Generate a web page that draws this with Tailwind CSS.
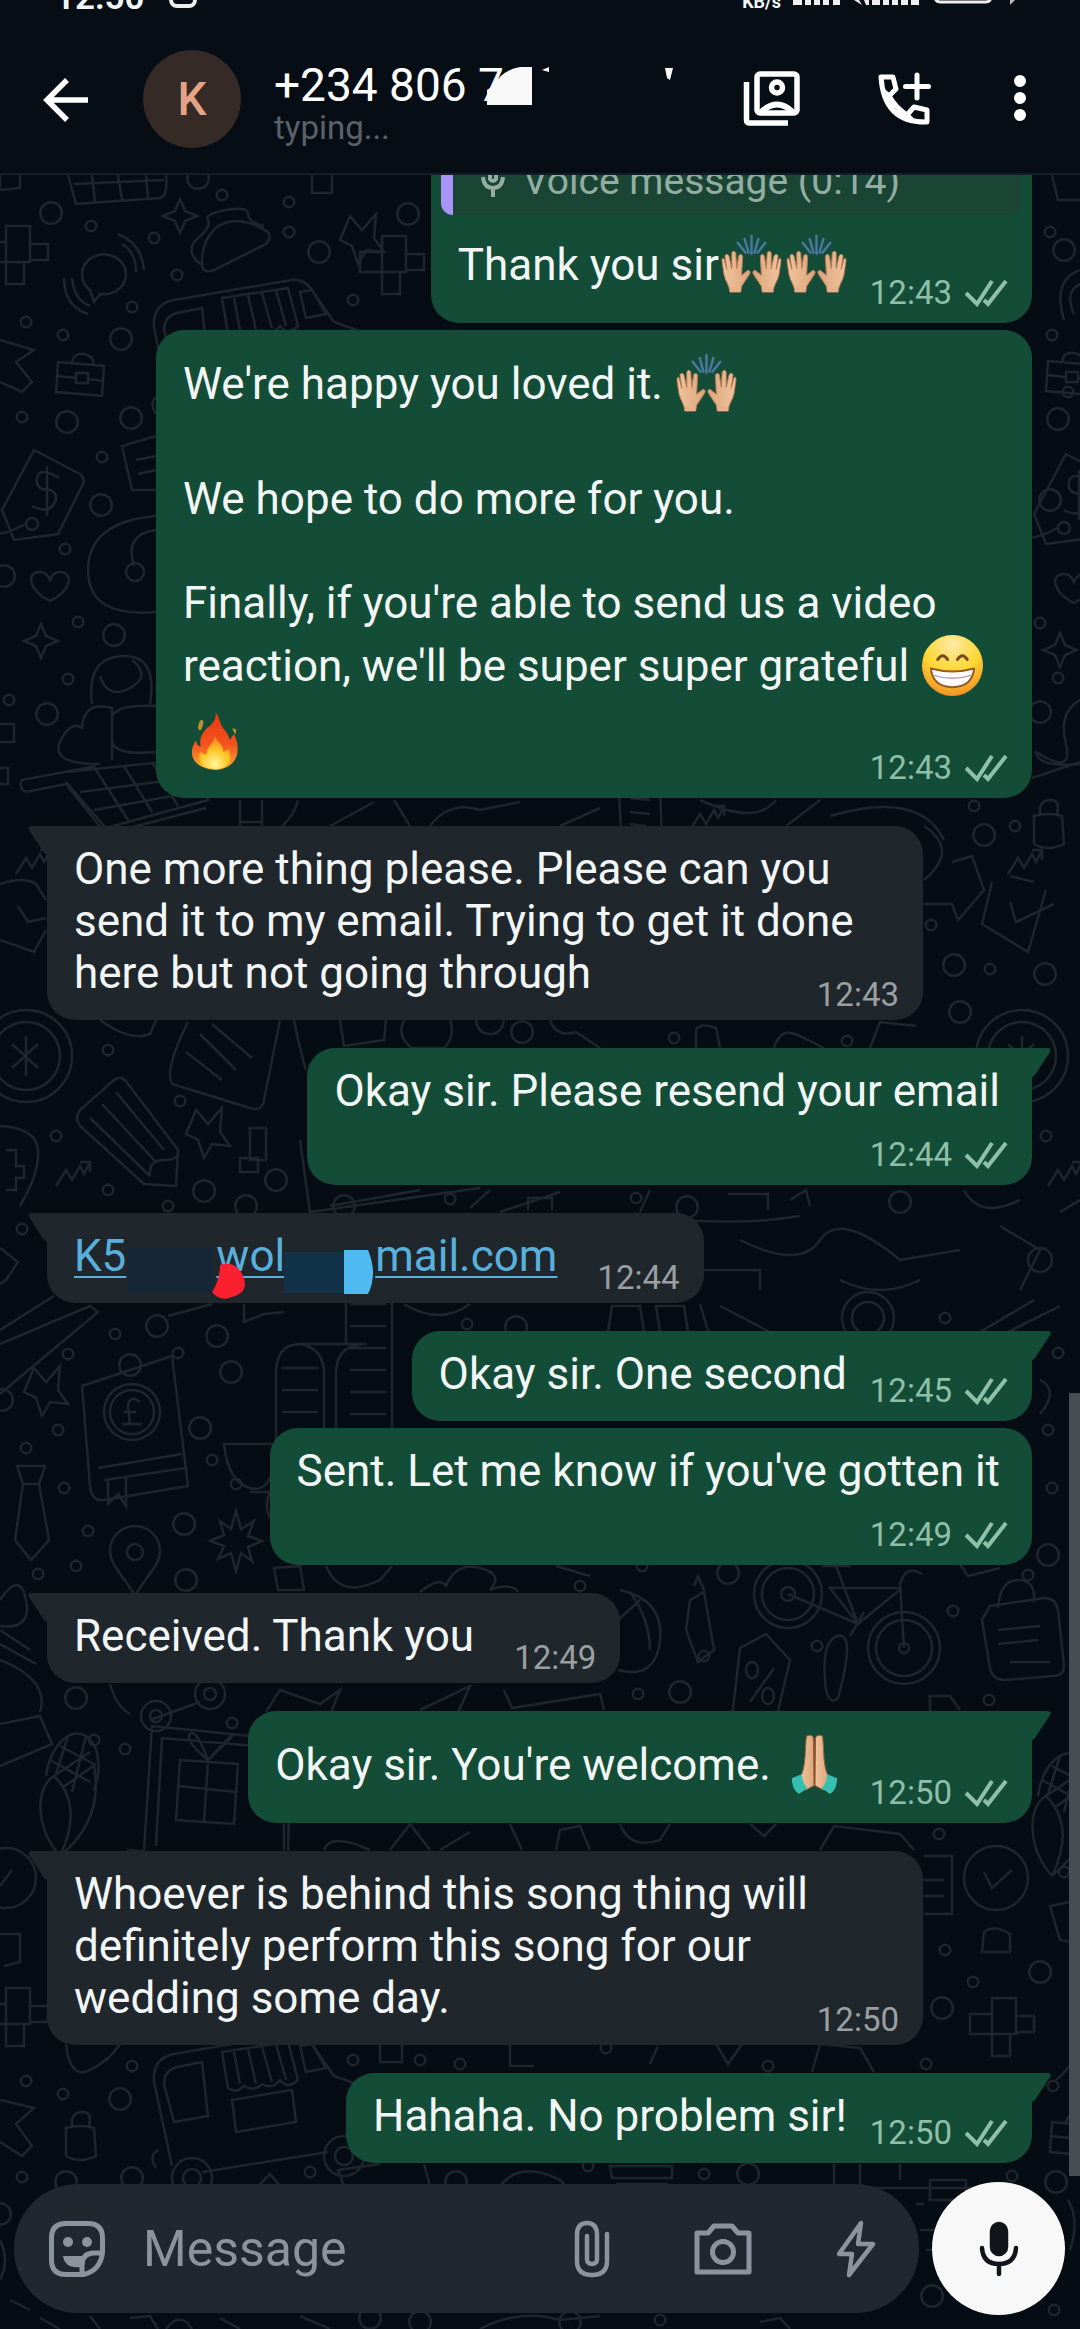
<!DOCTYPE html>
<html lang="en">
<head>
<meta charset="utf-8">
<meta name="viewport" content="width=device-width, initial-scale=1">
<title>Chat</title>
<script src="https://cdn.jsdelivr.net/npm/@tailwindcss/browser@4"></script>
</head>
<body class="bg-[#050c14] font-[Roboto,sans-serif] text-[44px] leading-[52px] text-[#f3f6f6]">

<svg width="0" height="0" class="absolute" aria-hidden="true">
  <defs>
    <linearGradient id="skin" x1="0" x2="1"><stop offset="0" stop-color="#f0c49c"/><stop offset="1" stop-color="#dca57c"/></linearGradient>
    <radialGradient id="face" cx=".5" cy=".15" r=".9"><stop offset="0" stop-color="#ffe9a8"/><stop offset=".5" stop-color="#fdd835"/><stop offset="1" stop-color="#f08a24"/></radialGradient>
    <linearGradient id="flame" x1="0" x2="0" y1="0" y2="1"><stop offset="0" stop-color="#e8380d"/><stop offset=".55" stop-color="#f4511e"/><stop offset="1" stop-color="#ffb02e"/></linearGradient>
    <radialGradient id="core" cx=".5" cy=".85" r=".7"><stop offset="0" stop-color="#fff59d"/><stop offset=".6" stop-color="#ffca28"/><stop offset="1" stop-color="#ff9222"/></radialGradient>

    <symbol id="ticks" viewBox="0 0 44 28"><path d="M2 14l11 11L28 2M20 21l4 4L42 2" fill="none" stroke="#8fc0a9" stroke-width="4"/></symbol>
    <symbol id="tail-out" viewBox="0 0 20 30"><path d="M0 0H16Q21 0 19 4L4 27L0 30Z" fill="#144d37"/></symbol>
    <symbol id="tail-in" viewBox="0 0 20 30"><path d="M20 0H4Q-1 0 1 4L16 27L20 30Z" fill="#20272c"/></symbol>

    <g id="hand">
      <path d="M9 61C9 55 4 49 3 43L1 29Q1 26 3 27L6 38 4 24Q6 21 8 24L11 37 11 21Q13 18 15 21L16 37 18 24Q21 21 22 25L21 44 27 39Q31 39 29 43L21 55 20 61Z" fill="url(#skin)" stroke="#b97b56" stroke-width="1"/>
      <path d="M9 61h11v-5H9z" fill="#e8b08d"/>
    </g>
    <symbol id="hands" viewBox="0 0 66 66">
      <use href="#hand" x="2"/><use href="#hand" transform="matrix(-1 0 0 1 64 0)"/>
      <path d="M33 4v18M26 7l4 14M40 7l-4 14M19 11l8 10M47 11l-8 10" stroke="#4a78a0" stroke-width="2.5" stroke-linecap="round"/>
    </symbol>
    <symbol id="grin" viewBox="0 0 66 66">
      <circle cx="33" cy="33" r="31" fill="url(#face)"/>
      <path d="M18 27q5-8 10 0M38 27q5-8 10 0" fill="none" stroke="#7a4a1c" stroke-width="3" stroke-linecap="round"/>
      <path d="M11 36Q33 42 55 36Q53 55 33 55T11 36Z" fill="#fff" stroke="#9a5a20" stroke-width="2" stroke-linejoin="round"/>
      <path d="M14 43q19 6 38 0" fill="none" stroke="#b99fb0" stroke-width="1.5"/>
    </symbol>
    <symbol id="fire" viewBox="0 0 66 66">
      <path d="M33 5C38 12 37 18 43 24C46 28 47 32 48 34C49 30 51 29 52 28C59 42 57 62 33 64C10 62 4 48 13 34C14 38 16 40 18 40C16 32 20 25 25 21C31 16 34 12 33 5Z" fill="url(#flame)"/>
      <path d="M32 30C36 36 41 38 41 46L46 43C52 56 44 63 33 63C20 63 12 56 18 45Q20 49 24 48C24 40 31 38 32 30Z" fill="url(#core)"/>
      <path d="M17 14q5-3 3 5t-5 2zM50 22q6-1 3 6z" fill="#b8912c"/>
    </symbol>
    <symbol id="pray" viewBox="0 0 66 66">
      <path d="M25 4Q33 1 32 10L33 54 24 59 18 46C25 38 23 14 25 4Z" fill="url(#skin)" stroke="#9c5f3c" stroke-width="1"/>
      <path d="M41 4Q33 1 34 10L33 54 42 59 48 46C41 38 43 14 41 4Z" fill="url(#skin)" stroke="#9c5f3c" stroke-width="1"/>
      <path d="M33 8v46" stroke="#8c4f30" stroke-width="2"/>
      <path d="M10 47l10-4q1 10 6 14l-9 6q-7-5-7-16zM56 47l-10-4q-1 10-6 14l9 6q7-5 7-16z" fill="#35bfb0"/>
    </symbol>

    <!-- wallpaper doodles -->
    <path id="w-star" d="M0-17L5-5 17 0 5 5 0 17-5 5-17 0-5-5Z"/>
    <path id="w-heart" d="M0 15C-22 4-24-14-10-14Q-3-14 0-6Q3-14 10-14C24-14 22 4 0 15Z"/>
    <path id="w-pin" d="M0 36C-12 15-25 5-25-9A25 25 0 0 1 25-9C25 5 12 15 0 36ZM-8-8a8 8 0 1 0 16 0a8 8 0 1 0-16 0"/>
    <path id="w-coin" d="M-46 0a46 46 0 1 0 92 0a46 46 0 1 0-92 0M-34 0a34 34 0 1 0 68 0a34 34 0 1 0-68 0M-14-12L12 12M12-12L-14 12M0-20V20"/>
    <path id="w-squares" d="M-18-36H6V0H-18ZM6-18H24V-2H6ZM-18 0H0V22H-18ZM-40-20H-18V0H-40Z"/>
    <path id="w-case" d="M-24-14L22-10 20 20-26 16ZM-10-13Q-8-24 2-22T12-11M-25 0L-6 2M6 3L21 5M-6-3h12v10h-12z"/>
    <path id="w-note" d="M-22-34L20-28 22 30-18 34ZM-10-14L10-12M-10 0L10 2M-10 12L6 14"/>
    <path id="w-bow" d="M-12-22L0-8 14-24 12 0 22 14 4 12-4 26-10 8-22 2Z"/>
    <path id="w-tag" d="M-8-52L38-28Q44-24 40-16L16 32-28 38-40 8ZM-16 22a6 6 0 1 0 12 0a6 6 0 1 0-12 0M-16 22Q-40 34-50 32M17-24q-20-12-22 0t13 12q10 4 4 14t-22 2M5-36V14"/>
    <g id="w-van">
      <path d="M-50 70L-68-14Q-70-38-48-42L70-62Q84-64 94-46L112-20 140-10Q150-4 150 12V40L136 50M106 56L-20 76M-66 72Q-74 60-64 54M-58-12Q-58-28-40-30L-20-34-14 20-48 26Z"/>
      <path d="M0-44L66-54 76-16Q66-6 58-16Q50-6 40-12Q32-4 22-10Q14-2 6-8ZM12-44L18-12M26-47L34-12M40-49L50-14M54-52L64-16M10 4L70-6 74 26 14 36ZM78-50L90-52 104-28 84-24Z"/>
      <circle cx="-30" cy="82" r="20"/><circle cx="-30" cy="82" r="9"/><circle cx="122" cy="60" r="20"/><circle cx="122" cy="60" r="9"/>
    </g>
    <g id="w-scroll"><path d="M-40 70V-10Q-40-40-16-40H50Q20-40 20-10V50Q20 80 48 80T76 50V-100M-40 70Q-44 110-66 104T-92 60H-40M-16-40Q8-36 8-10V50Q10 76 30 80M30-100V-40M-66 108H20L24 80M-34-16H2M-34 6H2M-34 28H2M-34 50H2M-34 72H2M34-80H70M34-58H70M34-36H70M34-14H70M34 8H70M34 30H70"/></g>
    <g id="w-book"><path d="M-46-50L44-80 60 50-24 64Q-36 66-38 50ZM-30 32L54 18M-24 44L58 32M-20 42V68L-10 58-2 70V40"/><circle cx="4" cy="-24" r="28"/><circle cx="4" cy="-24" r="22"/><path d="M12-34Q2-42 0-30L2-12H-6M14-12H2M-4-24H8"/></g>
    <g id="w-pencil"><path d="M-44-20L-10-50Q-2-56 4-46L54 20 52 56 20 54-44-4Q-50-12-44-20ZM-34-12L26 46M-8-38L40 20M-22-26L32 32M26 46Q24 30 40 30T54 20"/></g>
    <g id="w-bike"><circle cx="-58" cy="-30" r="34"/><circle cx="-58" cy="-30" r="26"/><circle cx="-58" cy="-30" r="7"/><circle cx="58" cy="24" r="36"/><circle cx="58" cy="24" r="28"/><circle cx="58" cy="24" r="5"/><path d="M-58-30L12 0 56-36M-10-58L12 0M-24-58H4M58 24L54-40Q60-60 76-50M12 0L-16-36H54M4 12l14-24"/></g>
    <g id="w-bag"><path d="M-30-30L24-38Q36-38 38-26L44 30Q44 40 32 40L-14 44Q-28 44-30 32L-38-16ZM-22-28Q-20-56-2-56T14-34M-22-6L20-10M-22 8L18 4M-10 26H30"/></g>
    <g id="w-laptop"><path d="M-70 60L-62-64 76-50 74 70M-58 56L-52-52 66-42M-84 60L72 80Q60 90 40 86L-70 72ZM-34-30L24-26 20 34-38 30ZM-36-4L22 2M-6-28L-10 32M-6-30q-24-20-18-26t18 26q22-20 24-24t-24 24"/></g>
    <g id="w-corn"><path d="M-10 60C-36 30-34-10-16-20Q14 10-10 60Q34 24 24-30M-24-20C-20-50 0-70 16-60S30-20 24-6M-16-20L20-44M-8-8L26-32M-20-36L20-14M-10-50L24-32M-2-60L-14-22M16-60L2-4"/></g>
    <path id="w-cart" d="M-90 14Q-98 10-94 2L-20-12M-90 14L-50 6L-10 56L90 30M-50 4L-10 50L92 22L86-20L-50-6M-20-8L12 42M8-12L36 34M36-16L62 28M-36 14L88-2M-22 32L90 12"/>
    <path id="w-taco" d="M-32 26C-34-10-6-34 34-8Q38-2 32 4L-20 30Q-30 34-32 26ZM-34 24Q-50 10-36-2T-26-20T-8-30T14-26T30-14"/>
    <path id="w-chat" d="M-22 0A22 20 0 1 1-4 20L-10 28-14 16Q-22 10-22 0ZM14-40Q38-30 40-4M18-30Q32-22 32-2M-40 4Q-40 32-16 40M-32 4Q-30 26-14 32"/>
    <path id="w-tie" d="M-14-40H14L8-22 18 34 0 54-16 34-8-22ZM-8-22H8"/>
    <path id="w-burst" d="M0-30L5-12 18-20 12-5 26 0 12 6 16 20 5 12 0 30-5 12-18 18-12 5-26 0-12-6-16-20-5-12Z"/>
    <path id="w-lock" d="M-14-8Q0-12 14-8L16 20Q0 28-14 20ZM-8-8Q-10-24 2-24T8-8"/>
    <path id="w-squig" d="M-16 12L-6-4 0 6 8-8 12 0 18-12M8-12H18V-2"/>
    <path id="w-percent" d="M-20-30L6-44 30-18 14 50-28 40ZM-14-8a6 8 0 1 0 12 0a6 8 0 1 0-12 0M2 18a6 8 0 1 0 12 0a6 8 0 1 0-12 0M14-10L-10 24"/>

    <path id="w-dots-s" stroke-linecap="round" d="M91 226h.1M222 195h.1M289 202h.1M154 238h.1M177 275h.1M132 307h.1M26 322h.1M63 335h.1M22 417h.1M102 457h.1M65 549h.1M78 622h.1M68 679h.1M9 700h.1M289 232h.1M353 300h.1M1050 232h.1M1052 335h.1M1068 392h.1M1040 623h.1M1058 678h.1M974 806h.1M1015 826h.1M931 925h.1M990 969h.1M108 1050h.1M180 1101h.1M56 1136h.1M108 1190h.1M168 1206h.1M450 1199h.1M636 1198h.1M674 1038h.1M847 1041h.1M1046 1136h.1M22 1229h.1M115 1334h.1M68 1354h.1M178 1353h.1M467 1324h.1M945 1318h.1M1058 1353h.1M58 1430h.1M26 1448h.1M212 1460h.1M1048 1430h.1M64 1488h.1M236 1484h.1M88 1531h.1M1052 1488h.1M76 1566h.1M38 1574h.1M580 1586h.1M642 1566h.1M953 1611h.1M1028 1575h.1M817 1646h.1M704 1656h.1M638 1694h.1M989 1700h.1M94 1740h.1M125 1749h.1M232 1723h.1M939 1834h.1M945 1950h.1M973 1982h.1M1064 1872h.1M132 2066h.1M26 2081h.1M63 2094h.1M353 2060h.1M420 2060h.1M606 2048h.1M926 2064h.1M22 2177h.1M310 2172h.1M704 2174h.1M588 2166h.1M1012 2176h.1M1054 2310h.1M660 2320h.1M460 2064h.1M768 2066h.1M1053 2086h.1"/>
    <path id="w-dots-l" stroke-linecap="round" d="M51 213h.1M319 252h.1M408 214h.1M121 339h.1M131 418h.1M67 422h.1M101 505h.1M4 576h.1M114 635h.1M47 714h.1M1058 419h.1M1050 500h.1M1040 712h.1M198 178h.1M1064 250h.1M984 835h.1M954 965h.1M1045 974h.1M960 1012h.1M204 1191h.1M276 1180h.1M246 1206h.1M522 1032h.1M900 1202h.1M687 1207h.1M157 1326h.1M217 1336h.1M130 1365h.1M231 1372h.1M516 1327h.1M344 1206h.1M200 1428h.1M2 1400h.1M184 1524h.1M186 1580h.1M728 1573h.1M1048 1555h.1M680 1692h.1M76 1698h.1M942 2008h.1M1040 1972h.1M120 2099h.1M66 2182h.1M132 2178h.1M456 2182h.1M748 2174h.1M1056 2182h.1M932 2296h.1M370 2318h.1M420 2322h.1M570 2322h.1M0 2214h.1"/>
  </defs>
</svg>

<div class="relative isolate flex min-h-screen flex-col overflow-hidden">

  <svg class="absolute inset-0 -z-10 h-full w-full" viewBox="0 0 1080 2329" preserveAspectRatio="xMidYMin slice" fill="none" stroke="#1e252d" stroke-width="2.5" aria-hidden="true">
    <use href="#w-dots-s" stroke-width="13"/><use href="#w-dots-s" stroke="#050c14" stroke-width="8"/>
    <use href="#w-dots-l" stroke-width="24"/><use href="#w-dots-l" stroke="#050c14" stroke-width="19"/>
    <path d="M68 175L76 204 160 198Q168 196 166 175M92 175L95 202M118 175L122 200M146 175L148 198M74 184L164 180M312 175V193H332V175M0 190L20 188V175M0 175V188"/>
    <use href="#w-squares" x="24" y="262"/><use href="#w-chat" x="104" y="274"/><use href="#w-taco" x="234" y="240"/>
    <use href="#w-star" x="180" y="216"/><use href="#w-bow" x="362" y="238"/><use href="#w-squares" x="400" y="272"/>
    <use href="#w-van" x="222" y="342"/><path d="M0 340L34 350 16 362 32 382 22 392 0 382"/>
    <use href="#w-case" x="82" y="376"/><use href="#w-tag" x="42" y="502"/><path d="M156 436L122 446 132 490H156M136 460L156 456M138 474L156 470M156 516Q88 522 88 570T156 612M156 530Q124 534 134 566M126 572a9 9 0 1 0 18 0a9 9 0 1 0-18 0"/>
    <use href="#w-heart" x="50" y="586"/><use href="#w-star" x="41" y="641"/>
    <path d="M92 704Q86 658 122 656T150 704M100 676Q108 700 130 688T132 660M100 764Q50 764 60 742T82 728Q84 700 112 708V760M112 716Q118 704 156 706M112 740Q112 756 156 752M0 724H14V742H0M0 768H8V784H0"/>
    <use href="#w-cart" x="116" y="778"/>
    <path d="M240 800V826M262 800V826M240 822H262M298 800Q294 816 282 826M330 826L374 802M394 800L410 826"/>
    <use href="#w-note" x="640" y="812"/><use href="#w-squig" x="706" y="818"/><path d="M700 800Q756 826 776 800M786 826L820 800M830 816Q920 790 944 840M430 826Q450 800 480 810L520 802M560 826L600 808"/>
    <use href="#w-lock" x="1048" y="824"/>
    <!-- right margin, upper part -->
    <path d="M1052 175L1058 200H1080M1080 270Q1052 280 1064 320M1080 284Q1064 292 1074 314"/><use href="#w-case" x="1072" y="375"/><use href="#w-tag" x="1074" y="506"/><use href="#w-heart" x="1074" y="588"/><use href="#w-star" x="1060" y="650"/><path d="M1080 700Q1058 712 1066 744T1036 752Q1038 768 1080 764M1032 778L1080 762"/>
    <path d="M924 826Q960 850 924 880M952 862L972 856 984 890 958 920 952 904H924M1010 876L1034 882M992 882L982 924 1028 952 1046 890M1010 902L1016 922 1054 904"/>
    <use href="#w-squig" x="1024" y="862"/><use href="#w-squig" x="32" y="862"/>
    <path d="M0 884Q24 876 36 884L46 900M0 940L34 952 46 930M18 906L28 922 46 918"/>
    <use href="#w-coin" x="26" y="1056"/><use href="#w-coin" x="1022" y="1056"/>
    <path d="M100 1020Q130 1042 150 1034L156 1020M188 1022Q164 1070 172 1084L250 1108Q262 1112 264 1100L280 1020M200 1034L236 1070M212 1024L252 1058M186 1052L222 1080M294 1020Q300 1050 306 1070M340 1020L344 1046 384 1040 386 1020M404 1020Q396 1036 412 1048H444Q456 1036 450 1020M476 1020Q478 1034 490 1034T504 1020M550 1020Q556 1038 576 1032L600 1048M696 1048V1030Q700 1022 716 1028L720 1048M774 1048Q780 1026 800 1036T824 1048M870 1048L880 1022L916 1026"/>
    <use href="#w-pencil" x="124" y="1130"/><use href="#w-bow" x="208" y="1132"/><path d="M250 1128H266V1160H250ZM240 1158H258V1172H240ZM0 1126Q36 1128 38 1150T20 1206M6 1150h10v16h8v12h-8v12h-10M300 1140L310 1212 480 1188M330 1206L420 1190M500 1212L560 1192M470 1208L490 1190M528 1210V1198H552V1210M640 1212L650 1190M728 1194H768V1210M964 1190Q980 1220 1020 1200M1060 1212L1080 1200M790 1200L806 1190 810 1206"/>
    <use href="#w-squig" x="72" y="1174"/><use href="#w-squig" x="1064" y="1174"/>
    <!-- around the link message -->
    <path d="M0 1248L18 1262 6 1280 0 1284M0 1330L54 1296M0 1344L90 1306 98 1312 0 1394M168 1316L212 1304M244 1304V1322L264 1314 284 1312M404 1304Q440 1326 470 1304M700 1304L712 1344M720 1306L770 1332M980 1332L1034 1300M992 1340L1060 1306M608 1332L612 1306H640L644 1332M660 1332L656 1306H684L688 1332M660 1218Q740 1226 800 1216M740 1240Q800 1270 820 1240T900 1260L960 1250M700 1270H760V1290M840 1280Q880 1300 920 1280M1000 1226L1040 1250 1020 1290"/>
    <circle cx="868" cy="1318" r="26"/><circle cx="868" cy="1318" r="16"/><circle cx="1040" cy="1260" r="12"/>
    <use href="#w-scroll" x="316" y="1384"/><use href="#w-bow" x="46" y="1390"/><use href="#w-book" x="128" y="1436"/>
    <use href="#w-tie" x="31" y="1506"/><use href="#w-pin" x="135" y="1560"/><use href="#w-burst" x="236" y="1541"/>
    <path d="M1040 1380Q1060 1390 1040 1414M274 1568L300 1566 304 1590H278ZM326 1566Q340 1600 380 1580L392 1566M420 1592Q440 1576 446 1586Q456 1562 480 1568T490 1590Q510 1582 518 1592M556 1566L590 1576M270 1492Q262 1510 274 1522"/>
    <path d="M620 1590Q664 1600 660 1640T618 1670M630 1592Q650 1620 650 1650M618 1620L640 1600"/>
    <path d="M690 1600L704 1592 714 1650 698 1662 686 1630ZM694 1586l4-10 6 14M826 1690Q820 1640 838 1636T838 1698Q830 1706 826 1690"/>
    <use href="#w-bike" x="846" y="1624"/><use href="#w-bag" x="1020" y="1636"/><use href="#w-percent" x="760" y="1678"/>
    <path d="M960 1564L968 1576 1000 1568M0 1600Q20 1570 26 1600T0 1626M0 1630L30 1650M0 1644L36 1664M0 1660Q50 1680 40 1712"/>
    <path d="M110 1684Q116 1706 130 1714M150 1720L200 1702M266 1712L280 1690 320 1704 340 1690 324 1730M420 1710L470 1686 450 1730M504 1690L512 1708 600 1694 604 1710M930 1712V1696H950L960 1710"/>
    <circle cx="156" cy="1716" r="15"/><circle cx="156" cy="1716" r="6"/><circle cx="210" cy="1694" r="15"/><circle cx="210" cy="1694" r="6"/>
    <path d="M0 1724L40 1716 52 1744 0 1766"/><use href="#w-laptop" x="214" y="1790"/><use href="#w-corn" x="70" y="1796"/><use href="#w-corn" x="1062" y="1816"/>
    <path d="M284 1824V1850M324 1850Q330 1832 370 1850M390 1850L410 1824 430 1850M440 1850L470 1832M510 1824L522 1850M556 1850L560 1830 580 1826 590 1850M620 1824Q630 1850 660 1840L670 1824M750 1824L764 1836 776 1824M820 1850L834 1826 900 1834 914 1850M924 1856H952V1914H924M924 1880H944M924 1896H944"/>
    <circle cx="996" cy="1878" r="32"/><path d="M984 1872L992 1888 1012 1870"/><circle cx="6" cy="1878" r="30"/><path d="M0 1886L12 1870M0 1934H20V1962L4 1966M984 1932Q994 1924 1010 1934V1952H982ZM1080 1900L1050 1906 1060 1940 1080 1944"/>
    <use href="#w-squares" x="1010" y="2034"/><use href="#w-squares" x="24" y="2024"/>
    <path d="M66 2044Q70 2080 90 2070T120 2044M380 2044V2062H402V2044M510 2044V2066H534M650 2064L658 2046M716 2044L728 2064 742 2044M812 2072L820 2044 860 2048 874 2072M1056 2080Q1080 2060 1072 2044"/>
    <use href="#w-van" x="222" y="2096"/><path d="M0 2100L34 2108 16 2124 32 2146 22 2156 0 2142"/><use href="#w-lock" x="80" y="2136"/><use href="#w-case" x="1076" y="2136"/>
    <path d="M344 2186L338 2170 380 2164M424 2164L430 2186M500 2186Q520 2160 560 2180L568 2188M610 2166H672V2178H612ZM616 2184H668M258 2186L270 2174 280 2186M834 2164V2200M860 2164V2196M834 2188H1000M900 2164V2180M930 2180H966V2200H930ZM924 2204H916M920 2230H940M926 2250H946M40 2318L60 2329M90 2316L100 2329M130 2318L150 2316 158 2329M166 2329Q180 2310 192 2329M220 2318L240 2329M300 2316L330 2329M480 2329Q520 2308 560 2320L600 2316M760 2322L780 2318 790 2329M0 2240Q10 2260 0 2280M10 2300L30 2310M1068 2200Q1080 2220 1070 2250"/>
  </svg>

  <header class="border-b-2 border-[#161d26] bg-[#060d15]">
    <div class="flex h-3 items-end justify-between overflow-hidden pr-16 pl-[55px]" aria-hidden="true">
      <div class="flex items-end gap-6 pb-1">
        <span class="-mb-2 text-[35px] leading-9 font-semibold">12:50</span>
        <svg class="h-6 w-7" viewBox="0 0 28 24" fill="none" stroke="#eee" stroke-width="4"><rect x="2" y="2" width="24" height="20" rx="6"/></svg>
      </div>
      <div class="flex items-end gap-3">
        <span class="text-[18px] leading-5 font-bold">KB/s</span>
        <svg class="h-3 w-[49px]" viewBox="0 0 49 12" fill="#eee"><path d="M0 0h9v5H0zM12 0h6v5h-6zM21 0h6v5h-6zM30 0h6v5h-6zM40 0h7v5h-7z"/></svg>
        <svg class="h-3 w-[66px]" viewBox="0 0 66 12" fill="#eee"><path d="M0 0h5l3 5zM10 0h5v5h-3zM18 0h8v5h-8zM29 0h6v5h-6zM38 0h6v5h-6zM47 0h7v5h-7zM57 0h8v5h-8z"/></svg>
        <svg class="h-3 w-[64px]" viewBox="0 0 64 12" fill="none" stroke="#eee" stroke-width="3"><path d="M3-4q0 6 6 6h44q6 0 6-6"/></svg>
        <svg class="h-3 w-2" viewBox="0 0 8 12" fill="#bbb"><path d="M2 0h5L2 5z"/></svg>
      </div>
    </div>
    <div class="flex h-[161px] items-center pt-3 pr-[46px] pl-[34px]">
      <button type="button" aria-label="Back" class="mr-[45px]">
        <svg class="size-16" viewBox="0 0 64 64" fill="none" stroke="#fff" stroke-width="5.5"><path d="M54 33H13M33 13L13 33L33 53"/></svg>
      </button>
      <span class="mr-[33px] flex size-[98px] items-center justify-center rounded-full bg-[#352a25] text-[46px] font-medium text-[#e5a386]">K</span>
      <div class="relative min-w-0 flex-1 pt-2">
        <h1 class="text-[46px] leading-[50px] text-white">+234 806 7</h1>
        <p class="text-[33px] leading-[36px] text-[#5b6168]">typing...</p>
        <svg class="absolute top-2 left-0 h-[50px] w-[410px]" viewBox="0 0 410 50" fill="#f8f8f8" aria-hidden="true"><path d="M213 45V30L219 26Q228 10 246 7H258V45ZM268 10L275 7V12ZM391 8H399L396 20 393 18Z"/></svg>
      </div>
      <div class="flex items-center gap-[72px]">
        <button type="button" aria-label="Contact photos"><svg class="size-[60px]" viewBox="0 0 60 60" fill="none" stroke="#fff" stroke-width="5.5"><rect x="15" y="5" width="40" height="39" rx="3"/><path d="M4.500 13V51Q4.500 54 8 54H46" /><circle cx="35" cy="18.500" r="5.500"/><path d="M19 43Q35 28 51 43"/></svg></button>
        <button type="button" aria-label="Add to call"><svg class="size-[60px]" viewBox="0 0 60 60" fill="none" stroke="#fff" stroke-width="5" stroke-linejoin="round"><path d="M7 8H19L22 20L15 27Q22 39 33 46L40 38L53 41V53Q10 54 7 8ZM9 22L15 27M33 46L38 51"/><path d="M43 6V29M31.500 17.500H54.500" stroke-linecap="round"/></svg></button>
        <button type="button" aria-label="More options"><svg class="h-[60px] w-7" viewBox="10 0 28 60" fill="#fff"><circle cx="24" cy="12" r="6"/><circle cx="24" cy="29" r="6"/><circle cx="24" cy="46" r="6"/></svg></button>
      </div>
    </div>
  </header>

  <main class="flex flex-1 flex-col gap-7 pr-12 pl-[47px]">
    <section class="flex flex-col items-end gap-[7px]">
      <article class="rounded-b-[28px] bg-[#144d37] pb-[21px]">
        <blockquote class="mr-[10px] ml-[10px] flex h-10 items-end gap-[18px] overflow-hidden rounded-b-xl border-l-[12px] border-[#a893f8] bg-[#1a4535] pr-[122px] pl-[28px] text-[39px] leading-[46px] text-[#93ada2]">
          <svg class="h-10 w-6 shrink-0" viewBox="0 0 24 40" fill="none" stroke="#93ada2" stroke-width="4" aria-hidden="true"><path d="M2 2Q3 13 12 13T22 2M12 13V22"/><path d="M9-4V4Q12 8 15 4V-4"/></svg>
          <span class="shrink-0 pb-[11px]">Voice message (0:14)</span>
        </blockquote>
        <div class="mt-[13px] flex items-end justify-between gap-5 pr-6 pl-[27px]">
          <p class="leading-[74px]">Thank you sir<svg class="-mb-[17px] inline-block size-[65px] align-baseline" role="img" aria-label="raised hands"><use href="#hands"/></svg><svg class="-mb-[17px] inline-block size-[65px] align-baseline" role="img" aria-label="raised hands"><use href="#hands"/></svg></p>
          <span class="-mb-[10px] flex items-center gap-3 text-[33px] leading-[39px] text-[#8fbfa9]"><time>12:43</time><svg class="h-7 w-11"><use href="#ticks"/></svg></span>
        </div>
      </article>
      <article class="flex w-full max-w-[876px] flex-col rounded-[28px] bg-[#144d37] pt-[17px] pr-6 pb-[21px] pl-[27px]">
        <p class="leading-[74px]">We're happy you loved it. <svg class="-mb-[17px] inline-block size-[65px] align-baseline" role="img" aria-label="raised hands"><use href="#hands"/></svg></p>
        <p class="mt-[52px]">We hope to do more for you.</p>
        <p class="mt-[52px]">Finally, if you're able to send us a video</p>
        <p class="leading-[74px]">reaction, we'll be super super grateful <svg class="-mb-[17px] inline-block size-[65px] align-baseline" role="img" aria-label="grinning face"><use href="#grin"/></svg><wbr><svg class="-mb-[17px] inline-block size-[65px] align-baseline" role="img" aria-label="fire"><use href="#fire"/></svg></p>
        <span class="-mt-[29px] -mb-[10px] flex items-center gap-3 self-end text-[33px] leading-[39px] text-[#8fbfa9]"><time>12:43</time><svg class="h-7 w-11"><use href="#ticks"/></svg></span>
      </article>
    </section>

    <article class="relative flex w-full max-w-[876px] flex-col self-start rounded-[28px] rounded-tl-none bg-[#20272c] pt-[17px] pr-6 pb-[21px] pl-[27px]">
      <svg class="absolute top-0 -left-[19px] h-[30px] w-5" aria-hidden="true"><use href="#tail-in"/></svg>
      <p>One more thing please. Please can you send it to my email. Trying to get it done here but not going through</p>
      <time class="-mt-6 -mb-[15px] self-end text-[33px] leading-[39px] text-[#9b9fa2]">12:43</time>
    </article>

    <article class="relative flex flex-col self-end rounded-[28px] rounded-tr-none bg-[#144d37] pt-[17px] pr-6 pb-[21px] pl-[27px]">
      <svg class="absolute top-0 -right-[19px] h-[30px] w-5" aria-hidden="true"><use href="#tail-out"/></svg>
      <p class="pr-2">Okay sir. Please resend your email</p>
      <span class="mt-[18px] -mb-[10px] flex items-center gap-3 self-end text-[33px] leading-[39px] text-[#8fbfa9]"><time>12:44</time><svg class="h-7 w-11"><use href="#ticks"/></svg></span>
    </article>

    <article class="relative flex items-end gap-10 self-start rounded-[28px] rounded-tl-none bg-[#20272c] pt-[17px] pr-6 pb-[21px] pl-[27px]">
      <svg class="absolute top-0 -left-[19px] h-[30px] w-5" aria-hidden="true"><use href="#tail-in"/></svg>
      <a href="#" class="relative flex text-[#58b0dd]">
        <span class="underline decoration-2 underline-offset-[5px]">K5</span>
        <span class="ml-[90px] underline decoration-2 underline-offset-[5px]">wol</span>
        <span class="ml-[90px] underline decoration-2 underline-offset-[5px]">mail.com</span>
        <svg class="absolute top-0 left-[54px] h-[72px] w-[248px]" viewBox="0 0 248 72" aria-hidden="true"><path d="M0 18H84V63H0Z" fill="#152737"/><path d="M156 22H217V63H156Z" fill="#12324a"/><path d="M216 20H240Q250 44 240 64H216Z" fill="#4fbaf0"/><path d="M92 35Q108 30 115 46T104 67Q92 72 84 62Q92 50 92 35Z" fill="#fb2030"/></svg>
      </a>
      <time class="-mb-[15px] text-[33px] leading-[39px] text-[#9b9fa2]">12:44</time>
    </article>

    <section class="flex flex-col items-end gap-[7px]">
      <article class="relative flex items-end gap-[23px] rounded-[28px] rounded-tr-none bg-[#144d37] pt-[17px] pr-6 pb-[21px] pl-[27px]">
        <svg class="absolute top-0 -right-[19px] h-[30px] w-5" aria-hidden="true"><use href="#tail-out"/></svg>
        <p>Okay sir. One second</p>
        <span class="-mb-[10px] flex items-center gap-3 text-[33px] leading-[39px] text-[#8fbfa9]"><time>12:45</time><svg class="h-7 w-11"><use href="#ticks"/></svg></span>
      </article>
      <article class="flex flex-col rounded-[28px] bg-[#144d37] pt-[17px] pr-6 pb-[21px] pl-[27px]">
        <p class="pr-2">Sent. Let me know if you've gotten it</p>
        <span class="mt-[18px] -mb-[10px] flex items-center gap-3 self-end text-[33px] leading-[39px] text-[#8fbfa9]"><time>12:49</time><svg class="h-7 w-11"><use href="#ticks"/></svg></span>
      </article>
    </section>

    <article class="relative flex items-end gap-10 self-start rounded-[28px] rounded-tl-none bg-[#20272c] pt-[17px] pr-6 pb-[21px] pl-[27px]">
      <svg class="absolute top-0 -left-[19px] h-[30px] w-5" aria-hidden="true"><use href="#tail-in"/></svg>
      <p>Received. Thank you</p>
      <time class="-mb-[15px] text-[33px] leading-[39px] text-[#9b9fa2]">12:49</time>
    </article>

    <article class="relative flex items-end gap-[23px] self-end rounded-[28px] rounded-tr-none bg-[#144d37] pt-[17px] pr-6 pb-[21px] pl-[27px]">
      <svg class="absolute top-0 -right-[19px] h-[30px] w-5" aria-hidden="true"><use href="#tail-out"/></svg>
      <p class="leading-[74px]">Okay sir. You're welcome. <svg class="-mb-[17px] inline-block size-[65px] align-baseline" role="img" aria-label="folded hands"><use href="#pray"/></svg></p>
      <span class="-mb-[10px] flex items-center gap-3 text-[33px] leading-[39px] text-[#8fbfa9]"><time>12:50</time><svg class="h-7 w-11"><use href="#ticks"/></svg></span>
    </article>

    <article class="relative flex w-full max-w-[876px] flex-col self-start rounded-[28px] rounded-tl-none bg-[#20272c] pt-[17px] pr-6 pb-[21px] pl-[27px]">
      <svg class="absolute top-0 -left-[19px] h-[30px] w-5" aria-hidden="true"><use href="#tail-in"/></svg>
      <p>Whoever is behind this song thing will definitely perform this song for our wedding some day.</p>
      <time class="-mt-6 -mb-[15px] self-end text-[33px] leading-[39px] text-[#9b9fa2]">12:50</time>
    </article>

    <article class="relative flex items-end gap-[23px] self-end rounded-[28px] rounded-tr-none bg-[#144d37] pt-[17px] pr-6 pb-[21px] pl-[27px]">
      <svg class="absolute top-0 -right-[19px] h-[30px] w-5" aria-hidden="true"><use href="#tail-out"/></svg>
      <p>Hahaha. No problem sir!</p>
      <span class="-mb-[10px] flex items-center gap-3 text-[33px] leading-[39px] text-[#8fbfa9]"><time>12:50</time><svg class="h-7 w-11"><use href="#ticks"/></svg></span>
    </article>
  </main>

  <div class="absolute right-0 bottom-[153px] h-[783px] w-[11px] bg-[#484d53]" aria-hidden="true"></div>

  <form class="flex items-center gap-[13px] pt-4 pr-[15px] pb-[14px] pl-[14px]">
    <div class="flex h-[129px] min-w-0 flex-1 items-center rounded-[64px] bg-[#20272e] pr-[41px] pl-[31px]">
      <button type="button" aria-label="Emoji" class="mr-[34px]"><svg class="size-[64px]" viewBox="0 0 64 64" fill="none" stroke="#8b939c" stroke-width="5"><path d="M21 6.500H43Q57.500 6.500 57.500 21V36Q55 54 38 57.500H21Q6.500 57.500 6.500 43V21Q6.500 6.500 21 6.500ZM57 36H48Q37 37 37 48V57" /><g fill="#8b939c" stroke="none"><circle cx="23" cy="25" r="5"/><circle cx="42" cy="25" r="5"/><path d="M18 39H40Q38 46 36 50Q20 52 18 39Z"/></g></svg></button>
      <input type="text" aria-label="Message" placeholder="Message" class="w-0 min-w-0 flex-1 bg-transparent text-[50px] leading-[56px] text-white outline-none placeholder:text-[#8b939c]">
      <div class="flex items-center gap-20">
        <button type="button" aria-label="Attach"><svg class="h-16 w-10" viewBox="0 0 40 64" fill="none" stroke="#8b939c" stroke-width="4.500" stroke-linecap="round"><path d="M35 17V44Q35 58 20 58T5 44V18Q5 6 15 6T25 18V42Q25 47 20 47T15 42V19"/></svg></button>
        <button type="button" aria-label="Camera"><svg class="size-[62px]" viewBox="0 0 62 62" fill="none" stroke="#8b939c" stroke-width="5" stroke-linejoin="round"><path d="M5 15H16L22 8H40L46 15H57V54H5Z"/><circle cx="31" cy="34" r="10.500"/></svg></button>
        <button type="button" aria-label="Quick replies"><svg class="h-16 w-11" viewBox="0 0 44 64" fill="none" stroke="#8b939c" stroke-width="4.500" stroke-linejoin="round"><path d="M27 6L5 37H18L15 58L39 27H24Z"/></svg></button>
      </div>
    </div>
    <button type="button" aria-label="Record voice message" class="flex size-[133px] shrink-0 items-center justify-center rounded-full bg-[#f8f8f8]"><svg class="h-[60px] w-11" viewBox="0 0 44 60" fill="none" stroke="#111418" stroke-width="4.500" stroke-linecap="round"><rect x="15" y="5" width="14" height="30" rx="7" fill="#111418"/><path d="M5 29Q6 45 22 45T39 29M22 45V55"/></svg></button>
  </form>
</div>
</body>
</html></script>
